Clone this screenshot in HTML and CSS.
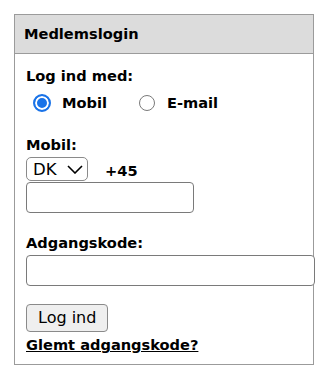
FILE: index.html
```html
<!DOCTYPE html>
<html lang="da">
<head>
<meta charset="utf-8">
<title>Medlemslogin</title>
<link rel="stylesheet" href="styles.css">
</head>
<body>
<div class="box">
  <div class="head">Medlemslogin</div>
  <form class="content">
    <div class="label">Log ind med:</div>
    <div class="radios">
      <label class="opt"><input type="radio" name="m" class="radio" checked><span>Mobil</span></label>
      <label class="opt"><input type="radio" name="m" class="radio"><span>E-mail</span></label>
    </div>
    <div class="label label-gap">Mobil:</div>
    <div class="phone">
      <div class="sel-wrap">
        <select class="sel"><option>DK</option></select>
        <svg class="chev" width="16" height="9" viewBox="0 0 16 9"><path d="M1 1 L8 8 L15 1" fill="none" stroke="#000" stroke-width="1.6"/></svg>
      </div>
      <span class="prefix">+45</span>
    </div>
    <input type="text" class="field field-short">
    <div class="label label-gap2">Adgangskode:</div>
    <input type="password" class="field field-long">
    <button type="button" class="btn">Log ind</button>
    <a href="#" class="link">Glemt adgangskode?</a>
  </form>
</div>
</body>
</html>
```

FILE: styles.css
```css
body {
  margin: 0;
  padding: 14px;
  font-family: "DejaVu Sans", Verdana, sans-serif;
  color: #000;
  background: #fff;
}
.box {
  width: 298px;
  border: 1px solid #9b9b9b;
}
.head {
  height: 38px;
  line-height: 38px;
  background: #dcdcdc;
  border-bottom: 1px solid #9b9b9b;
  padding-left: 9px;
  font-weight: bold;
  font-size: 14.6px;
}
.content {
  display: flex;
  flex-direction: column;
  align-items: flex-start;
  padding: 13px 0 11px 11px;
  margin: 0;
  font-size: 14.6px;
  font-weight: bold;
  line-height: 17px;
}
.radios {
  display: flex;
  align-items: center;
  height: 19px;
  margin-top: 9px;
}
.opt {
  display: inline-flex;
  align-items: center;
  margin-right: 24px;
}
.radio {
  appearance: none;
  -webkit-appearance: none;
  width: 16px;
  height: 16px;
  margin: 0 12px 0 8px;
  border-radius: 50%;
  border: 1px solid #7a7a7a;
  background: #fff;
  box-sizing: border-box;
}
.radio:checked {
  width: 18px;
  height: 18px;
  margin: 0 11px 0 7px;
  border: 2px solid #1a73e8;
  background: #1a73e8;
  box-shadow: inset 0 0 0 2px #fff;
}
.label-gap {
  margin-top: 24px;
}
.phone {
  display: flex;
  align-items: center;
  margin-top: 4px;
}
.sel-wrap {
  position: relative;
  width: 62px;
  height: 24px;
}
.sel {
  appearance: none;
  -webkit-appearance: none;
  width: 62px;
  height: 24px;
  box-sizing: border-box;
  border: 1px solid #8a8a8a;
  border-radius: 5px;
  background: #fff;
  padding: 0 0 0 6px;
  font-family: "DejaVu Sans", Verdana, sans-serif;
  font-size: 16.5px;
  color: #000;
}
.chev {
  position: absolute;
  left: 39px;
  top: 8px;
  background: #fff;
  padding-left: 2px;
}
.prefix {
  margin-left: 17px;
  margin-top: 2px;
}
.field {
  height: 31px;
  box-sizing: border-box;
  border: 1px solid #7a7a7a;
  border-radius: 4px;
  background: #fff;
  margin: 0;
}
.field-short {
  width: 168px;
  margin-top: 1px;
}
.label-gap2 {
  margin-top: 21px;
}
.field-long {
  width: 289px;
  margin-top: 4px;
}
.btn {
  margin-top: 18px;
  height: 28px;
  padding: 0 11px;
  border: 1px solid #8a8a8a;
  border-radius: 4px;
  background: #efefef;
  font-family: "DejaVu Sans", Verdana, sans-serif;
  font-size: 16px;
  color: #000;
  line-height: 26px;
}
.link {
  margin-top: 4px;
  color: #000;
  text-decoration: underline;
}
```
